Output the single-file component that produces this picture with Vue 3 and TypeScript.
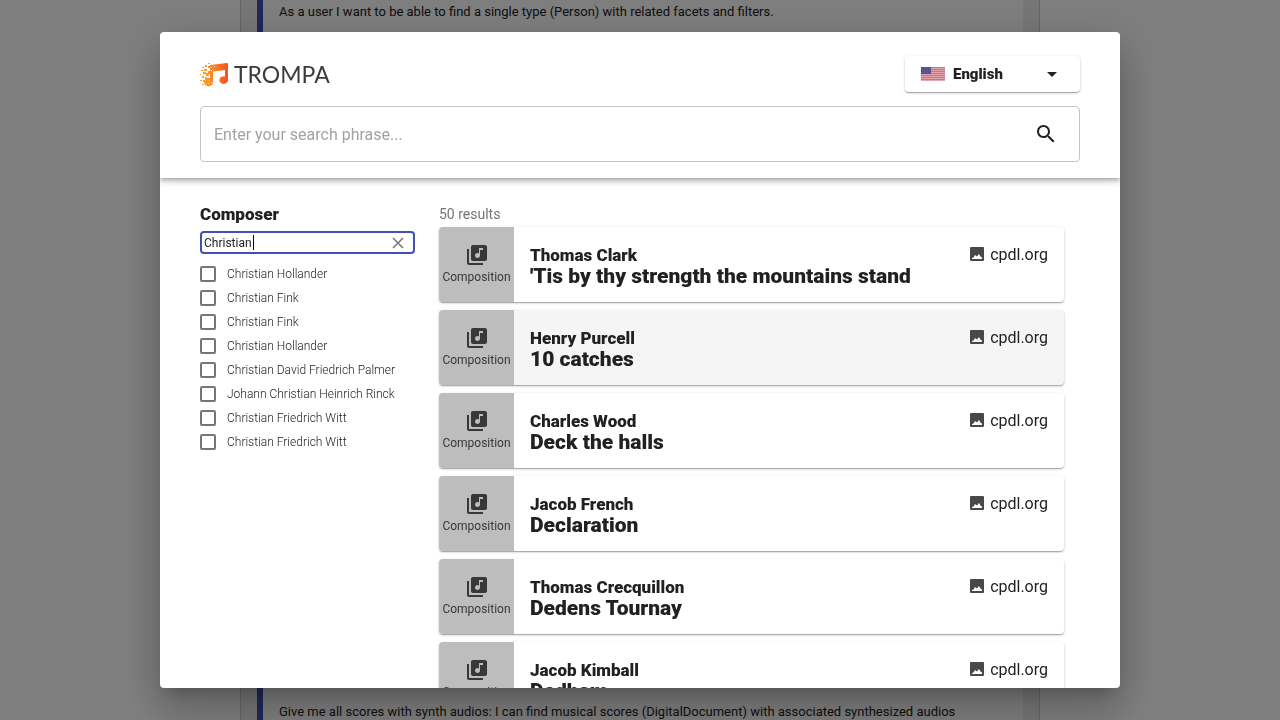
<script setup lang="ts">
import { ref } from 'vue'

interface Composer { id: number; name: string; checked: boolean }
interface Result { id: number; composer: string; title: string; source: string }

const language = ref('en')
const phrase = ref('')
const composerQuery = ref('Christian')

const composers = ref<Composer[]>([
  'Christian Hollander',
  'Christian Fink',
  'Christian Fink',
  'Christian Hollander',
  'Christian David Friedrich Palmer',
  'Johann Christian Heinrich Rinck',
  'Christian Friedrich Witt',
  'Christian Friedrich Witt',
].map((name, id) => ({ id, name, checked: false })))

const results: Result[] = [
  ['Thomas Clark', "'Tis by thy strength the mountains stand"],
  ['Henry Purcell', '10 catches'],
  ['Charles Wood', 'Deck the halls'],
  ['Jacob French', 'Declaration'],
  ['Thomas Crecquillon', 'Dedens Tournay'],
  ['Jacob Kimball', 'Dedham'],
].map(([composer, title], id) => ({ id, composer, title, source: 'cpdl.org' }))

const activeId = 1
const stripes = [0, 2, 4, 6, 8, 10, 12]
</script>

<template>
  <div class="page">
    <main class="stories">
      <blockquote>As a user I want to be able to find a single type (Person) with related facets and filters.</blockquote>
      <blockquote>Give me all scores with synth audios: I can find musical scores (DigitalDocument) with associated synthesized audios</blockquote>
    </main>

    <div class="backdrop">
      <section class="dialog" role="dialog" aria-modal="true" aria-label="Search">
        <header class="head">
          <div class="top">
            <div class="brand">
              <svg class="mark" viewBox="0 0 28 25" aria-hidden="true">
                <defs>
                  <linearGradient id="flame" x1="0" y1="0" x2="1" y2="0">
                    <stop offset="0" stop-color="#fba02a" />
                    <stop offset="0.500" stop-color="#fb7a25" />
                    <stop offset="1" stop-color="#fa4f22" />
                  </linearGradient>
                </defs>
                <path fill="url(#flame)" d="M10 3 27 1Q28 1 28 2V18a4.300 3.800 0 1 1-3-3.500V8L13 9.500V20a4.500 4.300 0 1 1-3-4V12H8V9h2V6H8V4h2z" />
                <path fill="#fba02f" d="M5 3h2v2H5zM2 5h2v1H2zM1 8h2v1H1zM4 7h3v2H4zM3 10h3v2H3zM6 11h3v3H6zM2 14h2v2H2zM5 15h2v2H5zM0 18h2v1H0zM3 18h2v2H3zM2 22h2v1H2zM0 12h1v1H0zM8 1h2v1H8z" />
                <path fill="#fde3c0" d="M11 5h1v1h-1zM14 4h1v1h-1zM9 18h1v1H9zM11 20h1v1h-1zM8 21h1v1H8zM11 8h1v1h-1z" />
              </svg>
              <span class="wordmark">TROMPA</span>
            </div>
            <label class="language">
              <svg class="flag" viewBox="0 0 24 14" role="img" aria-label="United States">
                <path fill="#e3a6ae" d="M0 0h24v14H0z" />
                <rect v-for="y in stripes" :key="y" :y="y" width="24" height="1" fill="#cf7280" />
                <path fill="#55508a" d="M0 0h10v7H0z" />
                <path stroke="#8884ae" stroke-width=".6" stroke-dasharray=".6 1.200" d="M1 1.500h8M1 3.500h8M1 5.500h8" />
              </svg>
              <select v-model="language" aria-label="Language">
                <option value="en">English</option>
              </select>
              <svg class="arrow" viewBox="0 0 24 24" aria-hidden="true"><path d="M7 10l5 5 5-5z" /></svg>
            </label>
          </div>
          <form class="search" @submit.prevent>
            <input v-model="phrase" type="text" aria-label="Search phrase" placeholder="Enter your search phrase..." />
            <button type="submit" aria-label="Search">
              <svg viewBox="0 0 24 24"><path d="M15.500 14h-.79l-.28-.27C15.410 12.590 16 11.110 16 9.500 16 5.910 13.090 3 9.500 3S3 5.910 3 9.500 5.910 16 9.500 16c1.610 0 3.090-.59 4.230-1.570l.27.28v.79l5 4.990L20.490 19l-4.990-5zm-6 0C7.010 14 5 11.990 5 9.500S7.010 5 9.500 5 14 7.010 14 9.500 11.990 14 9.500 14z" /></svg>
            </button>
          </form>
        </header>

        <div class="body">
          <aside class="facet">
            <h2>Composer</h2>
            <div class="filter">
              <input v-model="composerQuery" type="text" aria-label="Filter composers" />
              <span class="caret"></span>
              <button type="button" aria-label="Clear filter" @click="composerQuery = ''">
                <svg viewBox="0 0 12 12"><path d="M1 1l10 10M11 1L1 11" /></svg>
              </button>
            </div>
            <ul>
              <li v-for="c in composers" :key="c.id">
                <label><input v-model="c.checked" type="checkbox" /><span>{{ c.name }}</span></label>
              </li>
            </ul>
          </aside>

          <div class="results">
            <p class="count">50 results</p>
            <article v-for="r in results" :key="r.id" :class="['card', { active: r.id === activeId }]">
              <div class="kind">
                <svg viewBox="0 0 24 24" aria-hidden="true"><path d="M20 2H8c-1.100 0-2 .9-2 2v12c0 1.100.9 2 2 2h12c1.100 0 2-.9 2-2V4c0-1.100-.9-2-2-2zm-2 5h-3v5.500c0 1.380-1.120 2.500-2.500 2.500S10 13.880 10 12.500s1.120-2.500 2.500-2.500c.57 0 1.080.19 1.500.51V5h4v2zM4 6H2v14c0 1.100.9 2 2 2h14v-2H4V6z" /></svg>
                <span>Composition</span>
              </div>
              <div class="info">
                <h3>{{ r.composer }}</h3>
                <p>{{ r.title }}</p>
              </div>
              <div class="source">
                <svg viewBox="0 0 14 14" aria-hidden="true"><path fill-rule="evenodd" d="M1 0h12a1 1 0 0 1 1 1v12a1 1 0 0 1-1 1H1a1 1 0 0 1-1-1V1a1 1 0 0 1 1-1zM2 12h10V10.500L10.500 9.500 9 7 7 9.500 5 8 3.500 10.500 2 11z" /></svg>
                <span>{{ r.source }}</span>
              </div>
            </article>
          </div>
        </div>
      </section>
    </div>
  </div>
</template>

<style>
body { margin: 0; background: #fff; }
</style>

<style scoped>
* { box-sizing: border-box; }
.page {
  height: 100vh;
  overflow: hidden;
  font-family: Roboto, "Liberation Sans", sans-serif;
  color: #212121;
}
input, select, button { font: inherit; color: inherit; }
.stories {
  display: flex;
  flex-direction: column;
  justify-content: space-between;
  max-width: 800px;
  height: 100%;
  margin: 0 auto;
  padding: 0 16px;
  border: solid #ccc;
  border-width: 0 1px;
  background: #eee;
}
blockquote {
  margin: 0;
  padding: 0 16px 8px;
  border-left: 6px solid #3f51b5;
  background: #fff;
  font-size: 13px;
  line-height: 24px;
  white-space: nowrap;
}
blockquote:first-child { flex: 1; }
blockquote:last-child { padding: 0 16px; height: 20px; }
.backdrop {
  position: fixed;
  inset: 0;
  display: flex;
  justify-content: center;
  padding: 32px;
  background: rgba(0, 0, 0, .5);
}
.dialog {
  display: flex;
  flex-direction: column;
  width: 100%;
  max-width: 960px;
  overflow: hidden;
  border-radius: 4px;
  background: #fff;
  box-shadow: 0 11px 15px -7px rgba(0, 0, 0, .2), 0 24px 38px 3px rgba(0, 0, 0, .14), 0 9px 46px 8px rgba(0, 0, 0, .12);
}
.head {
  position: relative;
  flex: none;
  padding: 24px 40px 16px;
  box-shadow: 0 2px 4px -1px rgba(0, 0, 0, .2), 0 4px 5px rgba(0, 0, 0, .14), 0 1px 10px rgba(0, 0, 0, .12);
}
.top { display: flex; justify-content: space-between; align-items: center; margin-bottom: 14px; }
.brand { display: flex; align-items: center; gap: 6px; }
.mark { width: 28px; height: 25px; }
.wordmark { font-family: Lato, sans-serif; font-size: 23px; line-height: 24px; color: #3c3c3e; }
.language {
  display: flex;
  align-items: center;
  width: 175px;
  height: 36px;
  padding: 0 16px;
  border-radius: 4px;
  box-shadow: 0 1px 3px rgba(0, 0, 0, .2), 0 1px 1px rgba(0, 0, 0, .14), 0 2px 1px -1px rgba(0, 0, 0, .12);
}
.flag { width: 24px; height: 14px; margin-right: 8px; }
.language select {
  flex: 1;
  min-width: 0;
  padding: 0;
  border: 0;
  background: none;
  appearance: none;
  font-size: 15px;
  font-weight: 900;
  outline: none;
}
.arrow { width: 24px; height: 24px; fill: #212121; }
.search {
  display: flex;
  height: 56px;
  border: 1px solid #c4c4c4;
  border-radius: 4px;
  align-items: center;
}
.search input { flex: 1; min-width: 0; padding: 0 13px; border: 0; background: none; font-size: 16px; outline: none; }
.search input::placeholder { color: #a2a2a2; opacity: 1; }
button { display: grid; place-items: center; padding: 0; border: 0; background: none; }
.search button { width: 48px; height: 48px; margin-right: 9px; }
.search svg { width: 24px; height: 24px; fill: #212121; }
.body { display: flex; gap: 24px; flex: 1; min-height: 0; padding: 24px 56px 0 40px; overflow: hidden; }
.facet { flex: 0 0 215px; }
h2 { margin: 0 0 5px; font-size: 17px; line-height: 24px; font-weight: 900; }
.filter {
  position: relative;
  display: flex;
  align-items: center;
  height: 23px;
  border: 2px solid #3f51b5;
  border-radius: 4px;
}
.filter input { flex: 1; min-width: 0; padding: 0 2px; border: 0; background: none; font-size: 12px; outline: none; }
.caret { position: absolute; left: 51px; top: 2px; width: 1px; height: 15px; background: #000; }
.filter button { width: 30px; height: 19px; }
.filter svg { width: 12px; height: 12px; fill: none; stroke: #757575; stroke-width: 1.5; }
ul { margin: 8px 0 0; padding: 0; list-style: none; }
li label { display: flex; align-items: center; gap: 11px; height: 24px; font-size: 12px; font-weight: 300; }
li input {
  width: 16px;
  height: 16px;
  margin: 0;
  border: 2px solid #757575;
  border-radius: 2px;
  appearance: none;
}
li input:checked { background: #3f51b5; }
.results { flex: 1; min-width: 0; }
.count { margin: 0 0 1px; font-size: 14px; line-height: 24px; color: #757575; }
.card {
  display: flex;
  height: 75px;
  margin-bottom: 8px;
  overflow: hidden;
  border-radius: 4px;
  background: #fff;
  box-shadow: 0 1px 3px rgba(0, 0, 0, .2), 0 1px 1px rgba(0, 0, 0, .14), 0 2px 1px -1px rgba(0, 0, 0, .12);
}
.card.active { background: #f5f5f5; }
.kind {
  display: flex;
  flex-direction: column;
  align-items: center;
  justify-content: center;
  flex: 0 0 75px;
  background: #bdbdbd;
  font-size: 12px;
  line-height: 20px;
}
.kind svg { width: 24px; height: 24px; fill: #383838; }
.kind span { color: #383838; }
.info { flex: 1; min-width: 0; padding: 16px; }
h3 { margin: 0; font-size: 17px; line-height: 24px; font-weight: 900; }
.info p { margin: 0; font-size: 21px; line-height: 18px; font-weight: 900; }
.source { display: flex; align-items: center; gap: 6px; height: 24px; margin: 15px 16px 0 0; font-size: 16px; }
.source svg { width: 14px; height: 14px; fill: #484848; }
</style>
